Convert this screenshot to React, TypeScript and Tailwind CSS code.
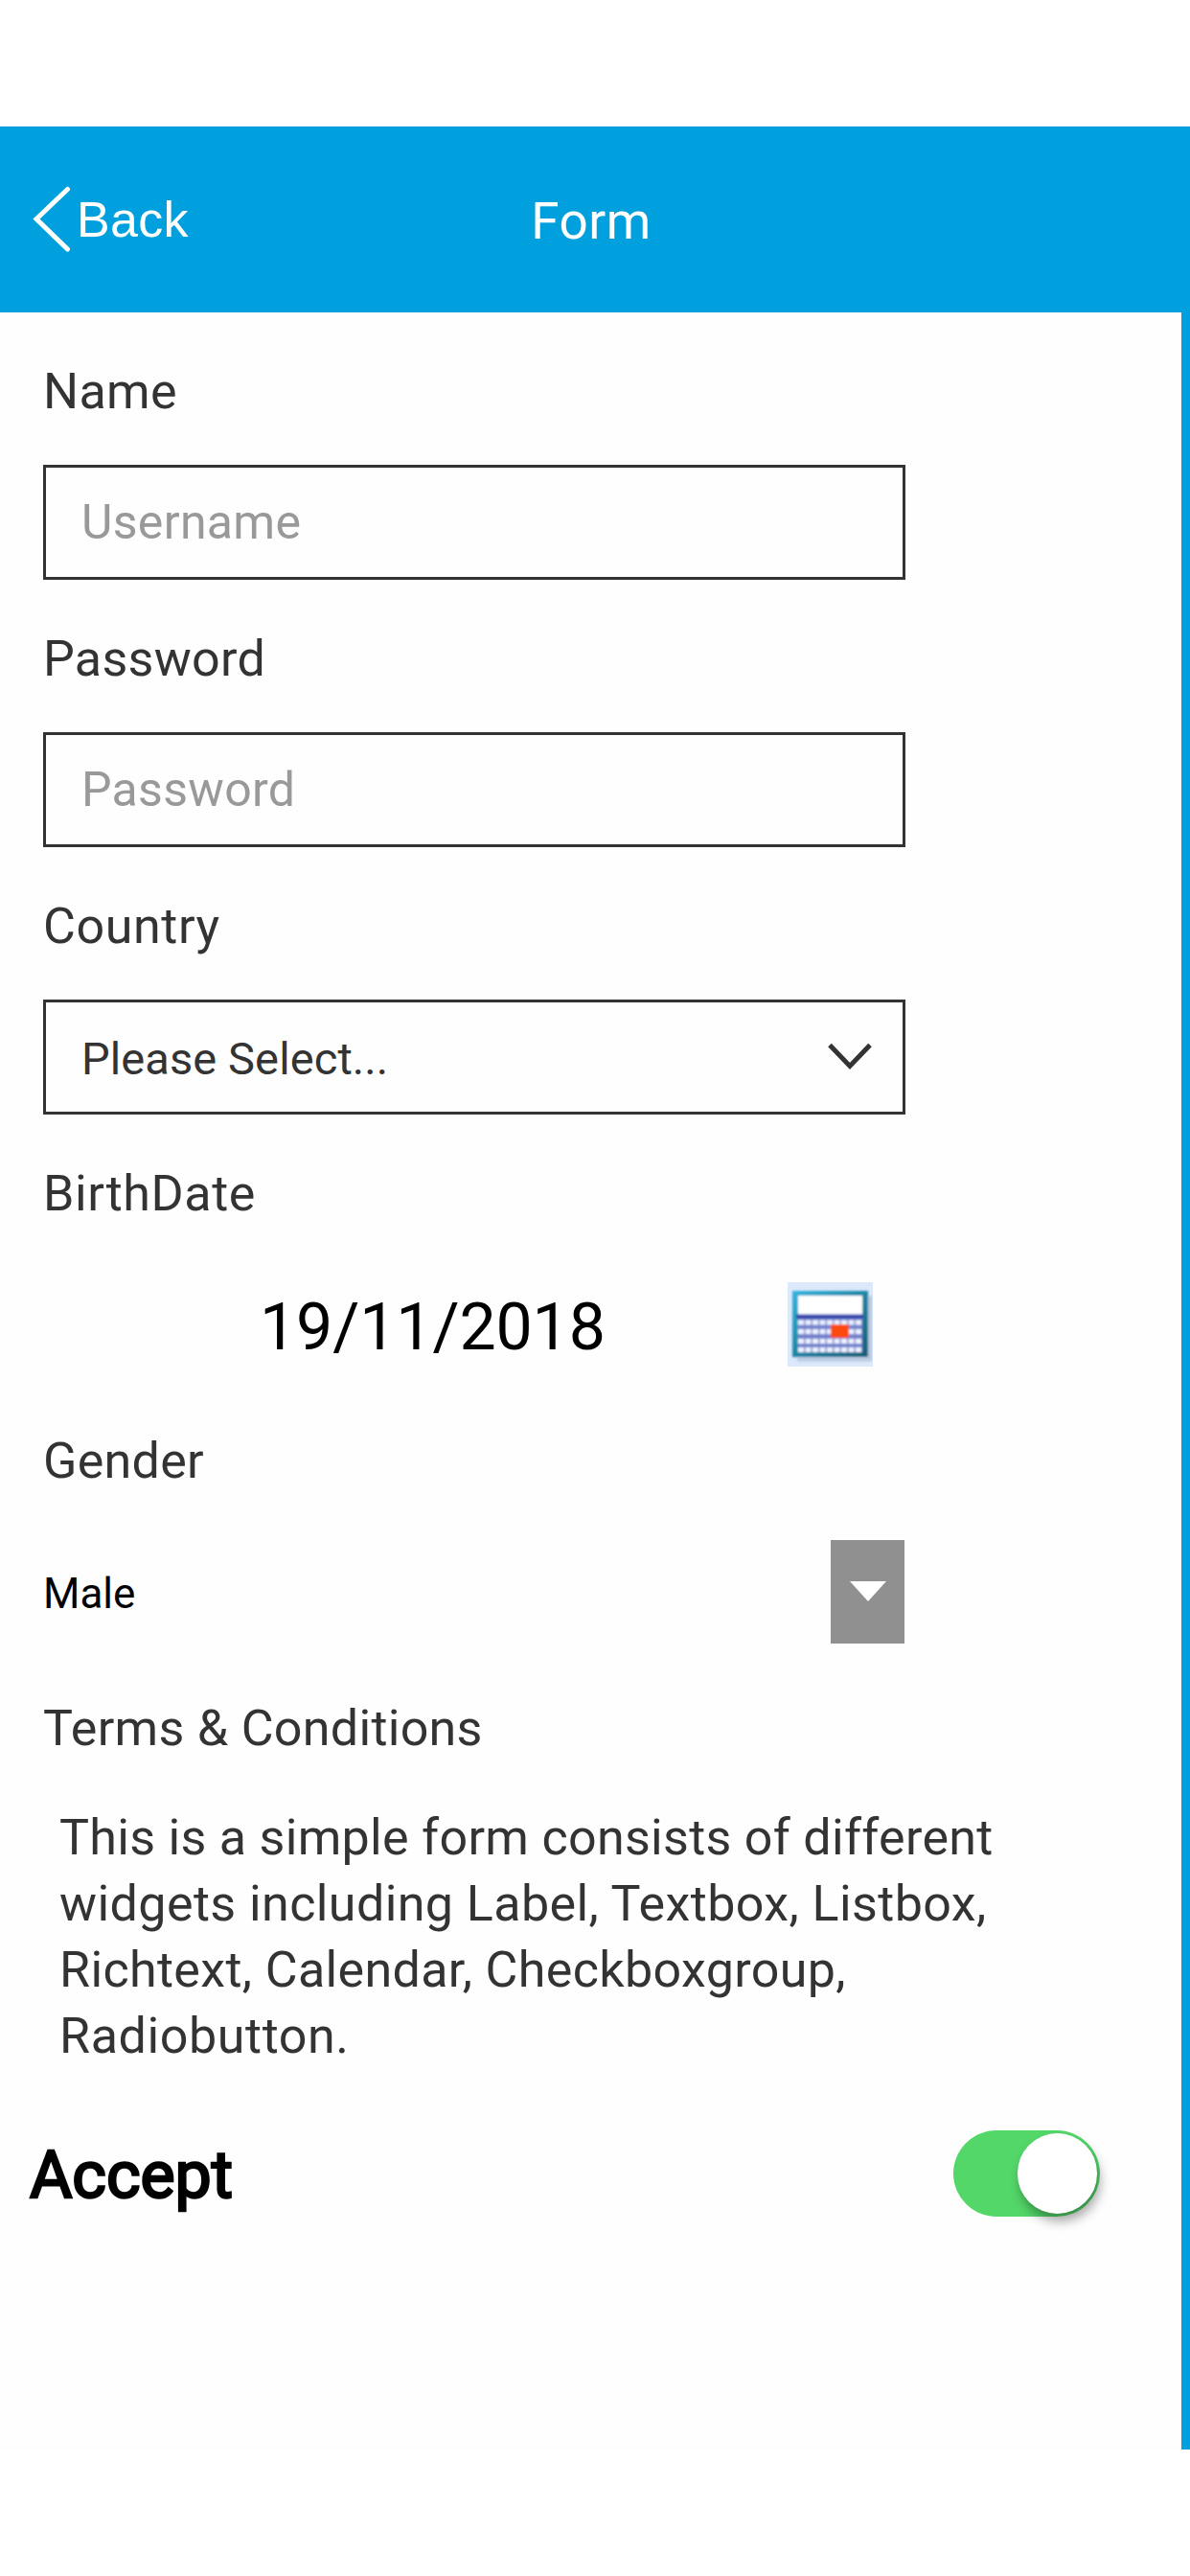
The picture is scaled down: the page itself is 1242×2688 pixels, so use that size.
import type { ReactNode } from "react";

function Label({ children, wide = false }: { children: ReactNode; wide?: boolean }) {
  return (
    <div
      className={`mt-[52px] pt-[1px] text-[52px] leading-[59px] text-[#333333] ${
        wide ? "tracking-[0.6px]" : "tracking-[0.3px]"
      }`}
    >
      {children}
    </div>
  );
}

function Field({
  label,
  wide,
  children,
}: {
  label: string;
  wide?: boolean;
  children: ReactNode;
}) {
  return (
    <div className="flex flex-col">
      <Label wide={wide}>{label}</Label>
      <div className="mt-[47px] flex h-[120px] w-[900px]">{children}</div>
    </div>
  );
}

const boxClass =
  "h-full w-full border-[3px] border-[#333333] bg-transparent pl-[37px] text-[50px] tracking-[0.3px] text-[#333333] outline-none placeholder:text-[#999999] placeholder:opacity-100";

function CalendarIcon() {
  const columns = [11, 18.5, 26, 33.5, 41, 48.5, 56, 63.5, 71];
  const rows = [39.5, 49, 59, 68];
  return (
    <svg width="89" height="88" viewBox="0 0 89 88">
      <defs>
        <linearGradient id="frame" x1="0" y1="0" x2="1" y2="1">
          <stop offset="0" stopColor="#35b4de" />
          <stop offset="0.5" stopColor="#1c86a6" />
          <stop offset="1" stopColor="#135f78" />
        </linearGradient>
        <filter id="soft" x="-10%" y="-10%" width="120%" height="120%">
          <feGaussianBlur stdDeviation="1.2" />
        </filter>
      </defs>
      <rect width="89" height="88" fill="#dce9fb" />
      <g filter="url(#soft)">
        <path d="M10 80.5H86V14" fill="none" stroke="#b9c9e0" strokeWidth="4" />
        <rect x="5" y="9" width="79" height="69" fill="url(#frame)" />
        <rect x="11" y="14" width="67" height="20" fill="#ffffff" />
        <rect x="11" y="34" width="67" height="39" fill="#7583cc" />
        <rect x="9" y="33.5" width="70" height="4.5" fill="#3546ae" />
        {rows.map((y) =>
          columns.map((x) => (
            <rect key={`${x}-${y}`} x={x} y={y} width="6" height="5" fill="#edf2ff" />
          )),
        )}
        <rect x="45" y="44" width="19" height="14" fill="#fc4a10" />
      </g>
    </svg>
  );
}

export default function App() {
  return (
    <div className="flex h-[2688px] w-[1242px] flex-col bg-white pt-[132px] font-['Roboto',sans-serif]">
      <header className="grid h-[194px] grid-cols-[1fr_auto_1fr] items-center bg-[#009fdd] pr-[8px] text-white">
        <button className="flex items-center pl-[32px] text-left">
          <svg width="44" height="76" viewBox="0 0 44 76" fill="none">
            <path
              d="M38.5 6.5 6 37.5 38.5 69"
              stroke="currentColor"
              strokeWidth="5"
              strokeLinecap="round"
              strokeLinejoin="miter"
            />
          </svg>
          <span className="ml-[4px] font-['Liberation_Sans',sans-serif] text-[52px] leading-[60px] tracking-[0.3px]">
            Back
          </span>
        </button>
        <h1 className="mt-[4px] text-[53px] leading-[60px] tracking-[0.5px]">Form</h1>
      </header>

      <main className="flex h-[2230px] flex-col border-r-[9px] border-[#009fdd] bg-[#fefefe] pl-[45px]">
        <Field label="Name">
          <input className={boxClass} placeholder="Username" />
        </Field>
        <Field label="Password">
          <input className={boxClass} type="password" placeholder="Password" />
        </Field>
        <Field label="Country" wide>
          <div className="flex w-full items-center justify-between border-[3px] border-[#333333] pr-[32px] pl-[37px]">
            <span className="mt-[4px] text-[47px] leading-[60px] tracking-[0.1px] text-[#333333]">
              Please Select...
            </span>
            <svg width="46" height="30" viewBox="0 0 46 30" fill="none">
              <path d="M2 2.5 23 24.5 44 2.5" stroke="#333333" strokeWidth="5" />
            </svg>
          </div>
        </Field>
        <Field label="BirthDate" wide>
          <div className="flex w-full items-center pr-[34px]">
            <span className="mt-[6px] ml-[226px] flex-1 text-[68px] leading-[80px] tracking-[-0.1px] text-black">
              19/11/2018
            </span>
            <CalendarIcon />
          </div>
        </Field>
        <Field label="Gender">
          <div className="flex w-full items-center justify-between pr-px">
            <span className="mt-[4px] text-[44px] leading-[60px] text-black">Male</span>
            <div className="flex h-[108px] w-[77px] items-center justify-center bg-[#909090]">
              <svg className="-mt-[2px]" width="38" height="21" viewBox="0 0 38 21">
                <path d="M0 0H38L19 21Z" fill="#ffffff" />
              </svg>
            </div>
          </div>
        </Field>

        <Label>Terms &amp; Conditions</Label>
        <p className="mt-[50px] ml-[17px] text-[52px] leading-[69px] text-[#333333]">
          <span className="block tracking-[0.3px]">This is a simple form consists of different</span>
          <span className="block tracking-[0.42px]">widgets including Label, Textbox, Listbox,</span>
          <span className="block tracking-[0.36px]">Richtext, Calendar, Checkboxgroup,</span>
          <span className="block tracking-[0.6px]">Radiobutton.</span>
        </p>

        <div className="mt-[64px] -ml-[14px] flex h-[90px] items-center justify-between pr-[85px]">
          <span className="mt-[3px] text-[68px] leading-[80px] text-black [-webkit-text-stroke:2.5px_black]">
            Accept
          </span>
          <div className="flex h-[90px] w-[153px] items-center justify-end rounded-full bg-[#53d769] pr-[3px]">
            <div className="h-[84px] w-[83px] rounded-full bg-white shadow-[3px_8px_12px_rgba(0,0,0,0.35)]" />
          </div>
        </div>
      </main>
    </div>
  );
}
